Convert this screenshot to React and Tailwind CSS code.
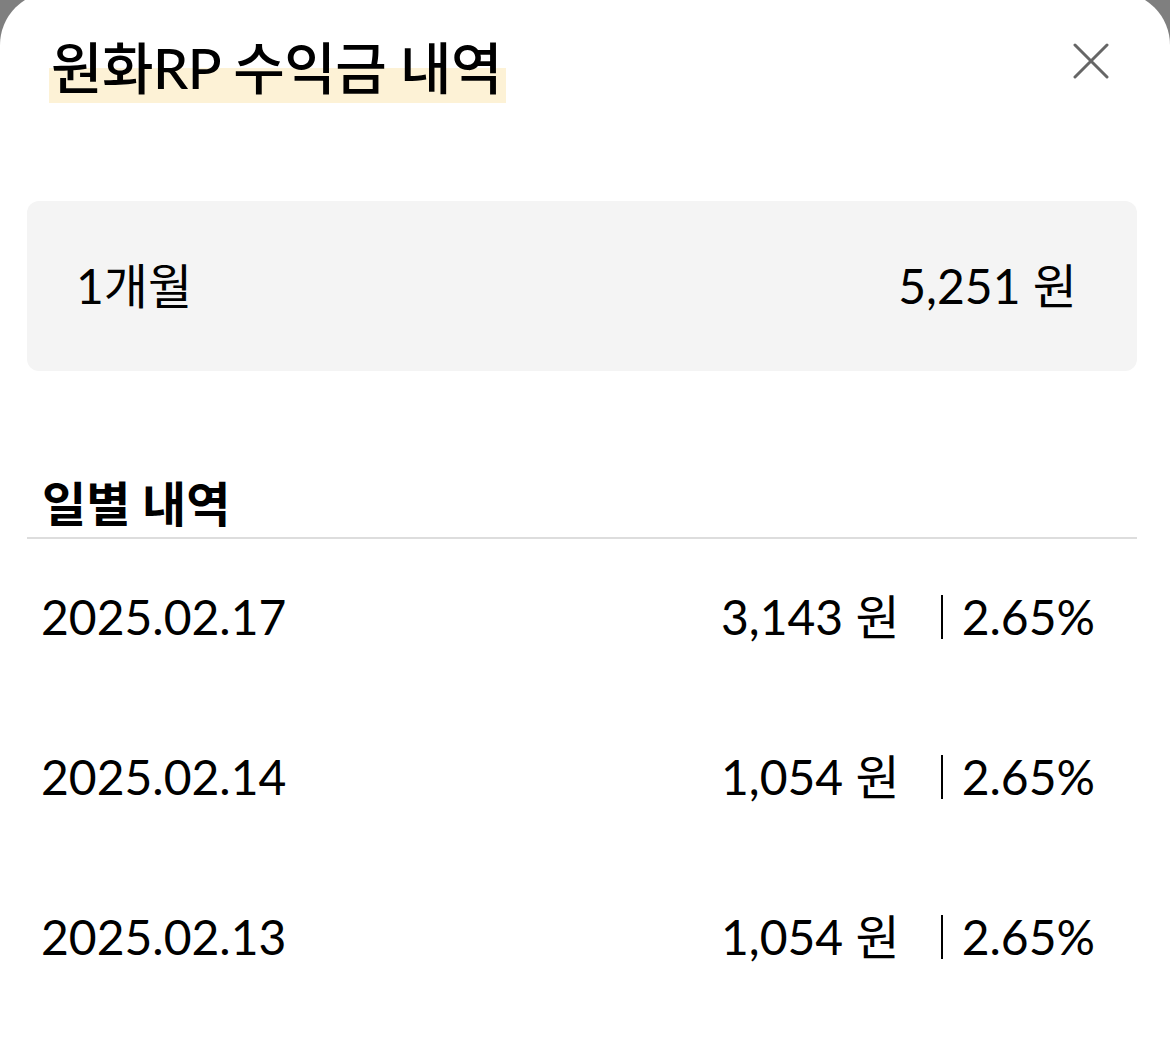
import React from "react";

const rows = [
  { date: "2025.02.17", amount: "3,143", rate: "2.65%" },
  { date: "2025.02.14", amount: "1,054", rate: "2.65%" },
  { date: "2025.02.13", amount: "1,054", rate: "2.65%" },
];

export default function App() {
  return (
    <div
      className="w-[1170px] h-[1062px] overflow-hidden bg-[#7f7f7f] text-black"
      style={{ fontFamily: 'Lato, "Noto Sans CJK KR", sans-serif' }}
    >
      <div className="mt-[-8px] h-[1080px] rounded-t-[53px] bg-white pl-[27px] pr-[33px]">
        {/* header */}
        <div className="flex items-start justify-between pt-[41px]">
          <h1 className="ml-[22px] text-[56px] font-medium leading-[70px] tracking-[-0.5px]">
            <span className="bg-[linear-gradient(to_bottom,transparent_50%,#fdf2d6_50%)] pl-[2px] pr-[4px] pb-[2px]">
              원화RP 수익금 내역
            </span>
          </h1>
          <button className="mr-[28px] mt-[10px] flex h-[36px] w-[36px] items-center justify-center">
            <svg width="36" height="36" viewBox="0 0 36 36" fill="none">
              <path d="M2 2 L34 34 M34 2 L2 34" stroke="#666" strokeWidth="3" strokeLinecap="round" />
            </svg>
          </button>
        </div>

        {/* summary box */}
        <div className="mt-[98px] flex h-[170px] items-center justify-between rounded-[12px] bg-[#f4f4f4] pl-[49px] pr-[60px] text-[48px] leading-none">
          <span>1개월</span>
          <span>5,251 원</span>
        </div>

        {/* daily heading */}
        <div className="mt-[104px] border-b-2 border-[#dddddd] pb-[4px] pl-[15px] text-[48px] font-bold leading-[58px]">
          일별 내역
        </div>

        {/* rows */}
        <div className="-mt-[2px]">
          {rows.map((r) => (
            <div
              key={r.date}
              className="flex h-[160px] items-center justify-between pl-[14px] pr-[42px] text-[48px] leading-none"
            >
              <span>{r.date}</span>
              <div className="flex items-center">
                <span>{r.amount} 원</span>
                <span className="ml-[41px] mr-[19px] h-[44px] w-[2px] bg-black" />
                <span>{r.rate}</span>
              </div>
            </div>
          ))}
        </div>
      </div>
    </div>
  );
}
